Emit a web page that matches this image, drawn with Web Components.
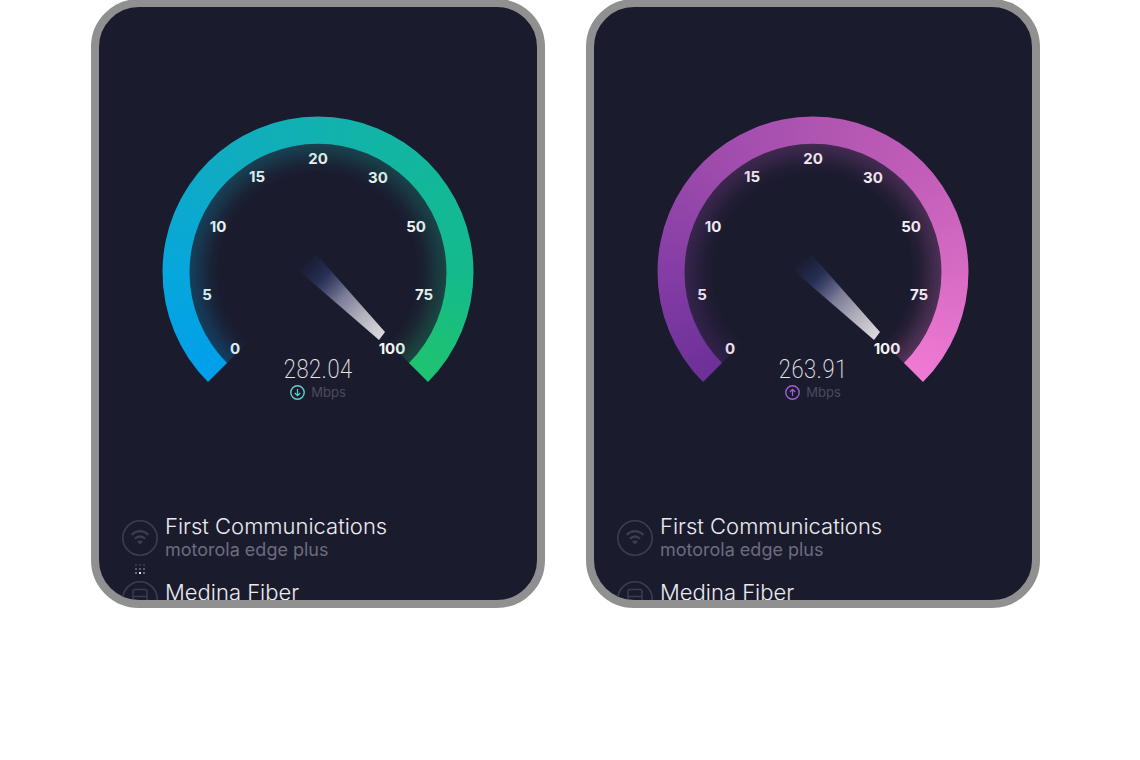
<!DOCTYPE html>
<html lang="en">
<head>
<meta charset="utf-8">
<meta name="viewport" content="width=device-width, initial-scale=1">
<title>Speed results</title>
<style>
  body { margin: 0; background: #fff; font-family: Inter, "Open Sans", sans-serif; }
</style>
</head>
<body>
<result-board>
  <speed-panel kind="download" value="282.04"></speed-panel>
  <speed-panel kind="upload" value="263.91"></speed-panel>
</result-board>

<template id="board-template">
  <style>
    :host {
      display: grid;
      grid-template-columns: 1fr 1fr;
      gap: 41px;
      padding: 0 100px 0 91px;
      margin-top: -1px;
    }
  </style>
  <slot></slot>
</template>

<template id="panel-template">
  <style>
    :host {
      display: block;
      box-sizing: border-box;
      border: 8px solid #8f908f;
      border-radius: 48px;
      background: #1b1b2e;
      overflow: hidden;
    }
    speed-gauge { margin: 109px auto 112px; }
  </style>
  <speed-gauge></speed-gauge>
  <connection-details></connection-details>
</template>

<template id="gauge-template">
  <style>
    :host { display: grid; justify-content: center; }
    .arc, .glow, .dial { grid-area: 1 / 1; display: block; width: 312px; height: 286px; }
    .arc, .glow { background: conic-gradient(from 225deg at 156px 156px, var(--stops)); }
    .arc { clip-path: path("M46 266 A155.500 155.500 0 1 1 266 266 L247 247 A128.500 128.500 0 1 0 65 247 Z"); }
    .glow {
      clip-path: path("M156 156 L64 248 A130 130 0 1 1 248 248 Z");
      -webkit-mask: radial-gradient(circle at 156px 156px, transparent 98px, rgba(0,0,0,.06) 108px, rgba(0,0,0,.18) 119px, rgba(0,0,0,.28) 130px);
      mask: radial-gradient(circle at 156px 156px, transparent 98px, rgba(0,0,0,.06) 108px, rgba(0,0,0,.18) 119px, rgba(0,0,0,.28) 130px);
    }
    .dial text { fill: #f6f6f4; font-size: 15px; font-weight: 700; text-anchor: middle; }
    speed-readout { grid-area: 1 / 1; align-self: end; }
  </style>
  <div class="glow"></div>
  <div class="arc"></div>
  <svg class="dial" viewBox="0 0 312 286" role="img" aria-label="Speed gauge">
    <defs>
      <linearGradient id="beam" gradientUnits="userSpaceOnUse" x1="142" y1="142" x2="220" y2="220">
        <stop offset="0" stop-color="#20294f" stop-opacity="0"/>
        <stop offset=".25" stop-color="#2b3560" stop-opacity=".8"/>
        <stop offset=".5" stop-color="#7c7c98"/>
        <stop offset=".75" stop-color="#b5b1bd"/>
        <stop offset="1" stop-color="#dcd9dd"/>
      </linearGradient>
    </defs>
    <path d="M154 138 L136 154 L217 224 L223 216 Z" fill="url(#beam)"/>
    <g>
      <text x="73" y="238">0</text>
      <text x="45" y="184">5</text>
      <text x="56" y="116">10</text>
      <text x="95" y="66">15</text>
      <text x="156" y="48">20</text>
      <text x="216" y="67">30</text>
      <text x="254" y="116">50</text>
      <text x="262" y="184">75</text>
      <text x="230" y="238">100</text>
    </g>
  </svg>
  <speed-readout></speed-readout>
</template>

<template id="readout-template">
  <style>
    :host { display: grid; justify-items: center; }
    .value { font: 200 26px/26px "Roboto Condensed", "Liberation Sans Narrow", sans-serif; color: #e6e6ea; }
    .unit { display: flex; align-items: center; gap: 6px; font-size: 13px; line-height: 20px; color: #4b4b5e; }
    svg { display: block; width: 15px; height: 15px; fill: none; stroke: var(--accent); }
  </style>
  <div class="value"></div>
  <div class="unit">
    <svg viewBox="0 0 15 15" aria-hidden="true">
      <circle cx="7.500" cy="7.500" r="6.700" stroke-width="1.400"/>
      <path class="arrow" stroke-width="1.200"/>
    </svg>
    <span>Mbps</span>
  </div>
</template>

<template id="details-template">
  <style>
    :host {
      display: grid;
      grid-template-columns: 36px 1fr;
      column-gap: 7px;
      height: 86px;
      padding-left: 23px;
      overflow: hidden;
    }
    .rail { padding-top: 6px; }
    svg { display: block; fill: none; stroke: #3d3d50; }
    .link { display: grid; place-items: center; height: 25px; }
    .link svg { fill: #a2a2ac; stroke: none; }
    :host([kind="upload"]) .link svg { visibility: hidden; }
    dl, dt, dd { margin: 0; }
    dl { display: grid; row-gap: 18px; align-content: start; }
    dt { font-size: 22px; font-weight: 350; line-height: 24px; color: #ececee; }
    dd { font-size: 18px; font-weight: 400; line-height: 24px; color: #6c6c7f; }
  </style>
  <div class="rail">
    <svg width="36" height="36" viewBox="0 0 36 36" aria-hidden="true">
      <circle cx="18" cy="18" r="17.200" stroke-width="1.600"/>
      <path d="M9.500 14.800 Q18 7.600 26.500 14.800 M12.800 18.800 Q18 14.200 23.200 18.800" stroke-width="2.200"/>
      <path d="M15 21.500 Q18 19.500 21 21.500 L18 24.500 Z" fill="#3d3d50" stroke="none"/>
    </svg>
    <div class="link">
      <svg width="12" height="12" viewBox="0 0 12 12" aria-hidden="true">
        <g opacity=".2"><rect x="1" y="1" width="2" height="2"/><rect x="5" y="1" width="2" height="2"/><rect x="9" y="1" width="2" height="2"/></g>
        <g opacity=".45"><rect x="1" y="5" width="2" height="2"/><rect x="5" y="5" width="2" height="2"/><rect x="9" y="5" width="2" height="2"/></g>
        <g opacity=".6"><rect x="1" y="9" width="2" height="2"/><rect x="9" y="9" width="2" height="2"/></g>
        <rect x="5" y="9" width="2" height="2" fill="#e8e8ec"/>
      </svg>
    </div>
    <svg width="36" height="36" viewBox="0 0 36 36" aria-hidden="true">
      <circle cx="18" cy="18" r="17.200" stroke-width="1.600"/>
      <rect x="11" y="8.500" width="14" height="18" rx="1.500" stroke-width="1.500"/>
      <path d="M11 15.500 H25" stroke-width="1.500"/>
    </svg>
  </div>
  <dl>
    <div><dt>First Communications</dt><dd>motorola edge plus</dd></div>
    <div><dt>Medina Fiber</dt></div>
  </dl>
</template>

<script>
  const KINDS = {
    download: {
      accent: "#63cfcc",
      arrow: "M7.500 4 V10.500 M4.800 8 L7.500 10.700 L10.200 8",
      stops: "#009fec 0deg, #06a7dc 45deg, #0fabc4 90deg, #12b1b0 135deg, #12b79c 180deg, #14ba8b 225deg, #1fc36f 270deg, #1fc36f 315deg, #009fec 315deg"
    },
    upload: {
      accent: "#a45fd3",
      arrow: "M7.500 11 V4.500 M4.800 7 L7.500 4.300 L10.200 7",
      stops: "#6c3098 0deg, #843da5 45deg, #9d4bac 90deg, #af54b1 135deg, #c05db8 180deg, #d76bc3 225deg, #f07ad3 270deg, #f07ad3 315deg, #6c3098 315deg"
    }
  };

  class TemplateElement extends HTMLElement {
    constructor() {
      super();
      const template = document.getElementById(this.constructor.template);
      this.attachShadow({ mode: "open" }).append(template.content.cloneNode(true));
    }
    get kind() { return KINDS[this.getAttribute("kind")] || KINDS.download; }
  }

  class ResultBoard extends TemplateElement {
    static template = "board-template";
  }

  class ConnectionDetails extends TemplateElement {
    static template = "details-template";
  }

  class SpeedReadout extends TemplateElement {
    static template = "readout-template";
    static observedAttributes = ["kind", "value"];
    attributeChangedCallback() {
      this.shadowRoot.querySelector(".value").textContent = this.getAttribute("value");
      this.shadowRoot.querySelector(".arrow").setAttribute("d", this.kind.arrow);
      this.style.setProperty("--accent", this.kind.accent);
    }
  }

  class SpeedGauge extends TemplateElement {
    static template = "gauge-template";
    static observedAttributes = ["kind", "value"];
    attributeChangedCallback(name, previous, value) {
      this.shadowRoot.querySelector("speed-readout").setAttribute(name, value);
      this.style.setProperty("--stops", this.kind.stops);
    }
  }

  class SpeedPanel extends TemplateElement {
    static template = "panel-template";
    connectedCallback() {
      const gauge = this.shadowRoot.querySelector("speed-gauge");
      gauge.setAttribute("kind", this.getAttribute("kind"));
      gauge.setAttribute("value", this.getAttribute("value"));
      this.shadowRoot.querySelector("connection-details").setAttribute("kind", this.getAttribute("kind"));
    }
  }

  customElements.define("speed-readout", SpeedReadout);
  customElements.define("connection-details", ConnectionDetails);
  customElements.define("speed-gauge", SpeedGauge);
  customElements.define("speed-panel", SpeedPanel);
  customElements.define("result-board", ResultBoard);
</script>
</body>
</html>
